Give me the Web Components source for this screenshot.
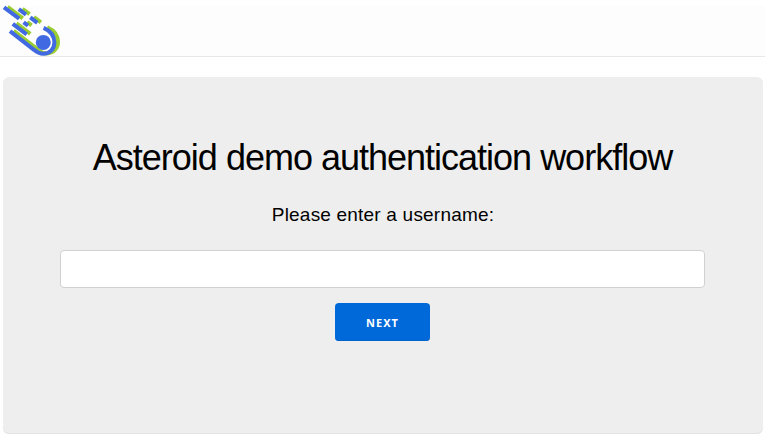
<!DOCTYPE html>
<html lang="en"><head><meta charset="utf-8"><title>Asteroid</title>
<style>html,body{margin:0;height:100%;background:#fff;overflow:hidden}body{font-family:"Liberation Sans",Arial,sans-serif;color:#000}</style></head>
<body><demo-app></demo-app>
<script>
const define=(name,html)=>customElements.define(name,class extends HTMLElement{
  constructor(){super();this.attachShadow({mode:'open'}).innerHTML=html;}
});
define('asteroid-logo',`<style>:host{display:block;width:66px;height:56px}svg{display:block}</style>
<svg width="66" height="56" viewBox="0 0 66 56" fill="none" stroke-width="4">
<defs><g id="trail"><path d="M4 7.3 19.2 18.7M18.8 9.2 26 14.6M30.3 17.4 37.3 22.8M23.6 22.4 28 25.7M12.8 23.8 26.7 34.3"/><path d="M10 31.2 34 49.8C37.2 52.6 40 53.8 43.2 53.8C49.5 53.8 54.4 49 54.4 42.5C54.4 35.5 50.2 30.7 43.6 27.8"/></g></defs>
<use href="#trail" x="3.6" y="-.4" stroke="#9acd32"/>
<use href="#trail" stroke="#4169e1"/>
<circle cx="43.3" cy="42.4" r="7.5" fill="#4169e1"/>
</svg>`);
define('top-bar',`<style>:host{display:flow-root;box-sizing:border-box;height:51px;background:#fdfdfd;border-bottom:1px solid #e7e7e7}slot{display:block;margin-top:-6px}</style><slot></slot>`);
define('form-panel',`<style>:host{display:flex;flex-direction:column;align-items:center;box-sizing:border-box;height:357px;margin:20px 2px 0 3px;padding:58px 58px 0 57px;border-radius:6px;background:#eee;box-shadow:inset 0 -1px 0 #e3e3e3}</style><slot></slot>`);
define('page-title',`<style>:host{display:block;align-self:stretch}h1{margin:0;text-align:center;font-size:36px;line-height:45px;font-weight:400;letter-spacing:-1px;white-space:nowrap}</style><h1><slot></slot></h1>`);
define('field-label',`<style>:host{display:block;margin-top:20px;padding-left:1px;font-size:19px;line-height:30px;letter-spacing:.2px}</style><slot></slot>`);
define('text-field',`<style>:host{display:block;align-self:stretch;margin-top:20px}input{display:block;width:100%;height:38px;box-sizing:border-box;border:1px solid #d1d1d1;border-radius:4px;background:#fff;padding:6px 10px;outline:0}</style><input type="text" aria-label="Username">`);
define('action-button',`<style>:host{display:block;margin-top:15px}button{display:block;width:95px;height:38px;padding:1px 0 0;border:0;border-radius:4px;background:#0069d9;box-shadow:inset 0 -1px 0 #0062cc;color:#fff;font:700 11px/16px "Noto Sans","Open Sans",sans-serif;letter-spacing:1px}</style><button type="button"><slot></slot></button>`);
define('demo-app',`<style>:host{display:flow-root;padding-top:6px}</style>
<top-bar><asteroid-logo></asteroid-logo></top-bar>
<form-panel><page-title>Asteroid demo authentication workflow</page-title><field-label>Please enter a username:</field-label><text-field></text-field><action-button>NEXT</action-button></form-panel>`);
</script></body></html>
